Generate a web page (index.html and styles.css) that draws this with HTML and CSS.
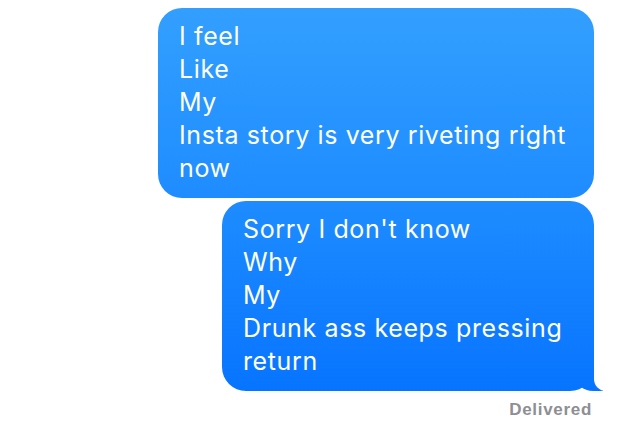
FILE: index.html
```html
<!DOCTYPE html>
<html>
<head>
<meta charset="utf-8">
<link rel="stylesheet" href="styles.css">
</head>
<body>
<div class="thread">
  <div class="bubble bubble-first">
    <span class="line">I feel</span>
    <span class="line">Like</span>
    <span class="line">My</span>
    <span class="line">Insta story is very riveting right</span>
    <span class="line">now</span>
  </div>
  <div class="bubble bubble-second tail">
    <span class="line">Sorry I don't know</span>
    <span class="line">Why</span>
    <span class="line">My</span>
    <span class="line">Drunk ass keeps pressing</span>
    <span class="line">return</span>
  </div>
  <div class="status">Delivered</div>
</div>
</body>
</html>
```

FILE: styles.css
```css
html, body {
  margin: 0;
  padding: 0;
  background: #ffffff;
}
body {
  width: 620px;
  height: 423px;
  overflow: hidden;
  font-family: "Liberation Sans", Arial, sans-serif;
}
.thread {
  display: flex;
  flex-direction: column;
  align-items: flex-end;
  gap: 3px;
  padding: 8px 26px 0 0;
}
.bubble {
  position: relative;
  box-sizing: border-box;
  height: 190px;
  padding: 12px 22px 13px 21px;
  border-radius: 24px;
  color: #ffffff;
  font-family: Inter, "Liberation Sans", sans-serif;
  font-size: 25px;
  line-height: 33px;
  letter-spacing: 0.62px;
  background: linear-gradient(180deg, #33a0ff 0px, #1e8cff 200px, #0673ff 400px);
  background-attachment: fixed;
}
.bubble-first {
  width: 436px;
}
.bubble-second {
  width: 372px;
}
.line {
  display: block;
  white-space: nowrap;
}
.tail::before {
  content: "";
  position: absolute;
  bottom: 0;
  right: -9px;
  width: 28px;
  height: 26px;
  background: linear-gradient(180deg, #33a0ff 0px, #1e8cff 200px, #0673ff 400px);
  background-attachment: fixed;
  border-bottom-left-radius: 18px 16px;
}
.tail::after {
  content: "";
  position: absolute;
  bottom: 0;
  right: -14px;
  width: 14px;
  height: 26px;
  background: #ffffff;
  border-bottom-left-radius: 12px 12px;
}
.status {
  margin-top: 6px;
  margin-right: 2px;
  font-size: 17px;
  line-height: 20px;
  font-weight: bold;
  letter-spacing: 0.7px;
  color: #8e8e93;
}
```
